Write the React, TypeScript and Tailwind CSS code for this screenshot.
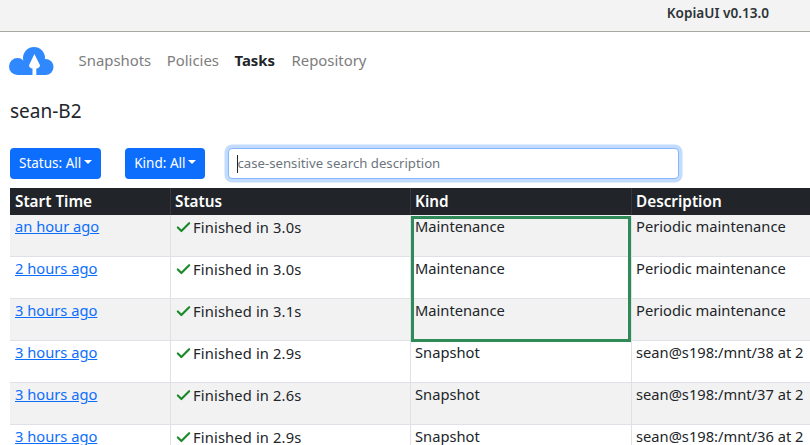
import { Check } from "lucide-react";

const rows = [
  { start: "an hour ago", status: "Finished in 3.0s", kind: "Maintenance", description: "Periodic maintenance" },
  { start: "2 hours ago", status: "Finished in 3.0s", kind: "Maintenance", description: "Periodic maintenance" },
  { start: "3 hours ago", status: "Finished in 3.1s", kind: "Maintenance", description: "Periodic maintenance" },
  { start: "3 hours ago", status: "Finished in 2.9s", kind: "Snapshot", description: "sean@s198:/mnt/38 at 2" },
  { start: "3 hours ago", status: "Finished in 2.6s", kind: "Snapshot", description: "sean@s198:/mnt/37 at 2" },
  { start: "3 hours ago", status: "Finished in 2.9s", kind: "Snapshot", description: "sean@s198:/mnt/36 at 2" },
];

function Logo() {
  return (
    <svg width="45" height="28" viewBox="0 0 45 28" className="block">
      <g fill="#3088ff">
        <circle cx="25" cy="11" r="11" />
        <circle cx="8.5" cy="19.5" r="8.5" />
        <circle cx="36.5" cy="20" r="8" />
        <rect x="8" y="14" width="29" height="14" />
      </g>
      <path d="M27.3 28 V21.5 C29.5 21.5 31 20 31 18.2 L25.4 7 L20 18.2 C20 20 21.5 21.5 23.5 21.5 V28 Z" fill="#fff" />
    </svg>
  );
}

function FilterButton({ label }: { label: string }) {
  return (
    <button className="flex h-[31px] items-center rounded-[4px] bg-[#0d6efd] px-[9px] text-[13.5px] text-white">
      {label}
      <span className="ml-[3px] mb-[3px] h-0 w-0 border-x-[4px] border-t-[4px] border-x-transparent border-t-white" />
    </button>
  );
}

export default function App() {
  return (
    <div className="h-[445px] w-[810px] overflow-hidden bg-white font-['Noto_Sans',sans-serif] text-[#212529]">
      <div className="flex h-[32px] items-center justify-end border-b border-[#a9a9a4] bg-[#f3f3f3] pr-[41px] pb-[4px] text-[13.6px] font-semibold text-[#2e3436]">
        KopiaUI v0.13.0
      </div>

      <nav className="flex h-[57px] items-center pl-[9px]">
        <Logo />
        <div className="ml-[24.5px] flex gap-[15.5px] text-[14.9px] text-[#7d7d7d]">
          <span>Snapshots</span>
          <span>Policies</span>
          <span className="font-bold text-[#212529]">Tasks</span>
          <span className="ml-px">Repository</span>
        </div>
      </nav>

      <h1 className="ml-[10px] mt-[9px] h-[50px] text-[19px] leading-[26px]">sean-B2</h1>

      <div className="flex items-center pl-[10px]">
        <FilterButton label="Status: All" />
        <div className="ml-[24px]">
          <FilterButton label="Kind: All" />
        </div>
        <div className="ml-[23px] flex h-[31px] w-[451px] items-center rounded-[4px] border border-[#86b7fe] bg-white px-[8px] text-[13.2px] text-[#6c757d] shadow-[0_0_0_3.5px_#c2dbfe]">
          <span className="mr-[-1px] h-[18px] w-px bg-[#212529]" />
          case-sensitive search description
        </div>
      </div>

      <div className="relative ml-[10px] mt-[9px] w-[1000px]">
        <table className="w-full table-fixed border-separate border-spacing-0 text-[14.7px]">
          <colgroup>
            <col className="w-[161px]" />
            <col className="w-[240px]" />
            <col className="w-[221px]" />
            <col />
          </colgroup>
          <thead>
            <tr className="h-[27px] bg-[#212529] text-left text-[15.3px] text-white">
              {["Start Time", "Status", "Kind", "Description"].map((title) => (
                <th key={title} className="border-r border-[#32383e] px-[4px] py-0 font-semibold first:px-[5px]">
                  {title}
                </th>
              ))}
            </tr>
          </thead>
          <tbody>
            {rows.map((row, index) => (
              <tr key={index} className={`h-[42px] ${index % 2 === 0 ? "bg-[#f2f2f2]" : "bg-white"}`}>
                <td className="border-b border-r border-[#dee2e6] px-[5px] pb-[18px] pt-0 align-top leading-[22px] text-[#0d6efd] underline">
                  {row.start}
                </td>
                <td className="border-b border-r border-[#dee2e6] px-[4px] pb-[17px] pt-[1px] align-top leading-[22px]">
                  <span className="flex items-center gap-px tracking-[0.15px]">
                    <Check size={17} strokeWidth={3} className="text-[#198a28]" />
                    {row.status}
                  </span>
                </td>
                <td className="border-b border-r border-[#dee2e6] px-[4px] pb-[18px] pt-0 align-top leading-[22px]">{row.kind}</td>
                <td className="whitespace-nowrap border-b border-[#dee2e6] px-[4px] pb-[18px] pt-0 align-top leading-[22px]">{row.description}</td>
              </tr>
            ))}
          </tbody>
        </table>
        {/* annotation box over the Kind column */}
        <div className="pointer-events-none absolute left-[401px] top-[28px] h-[126px] w-[220px] border-[3px] border-[#2e8b57]" />
      </div>
    </div>
  );
}
